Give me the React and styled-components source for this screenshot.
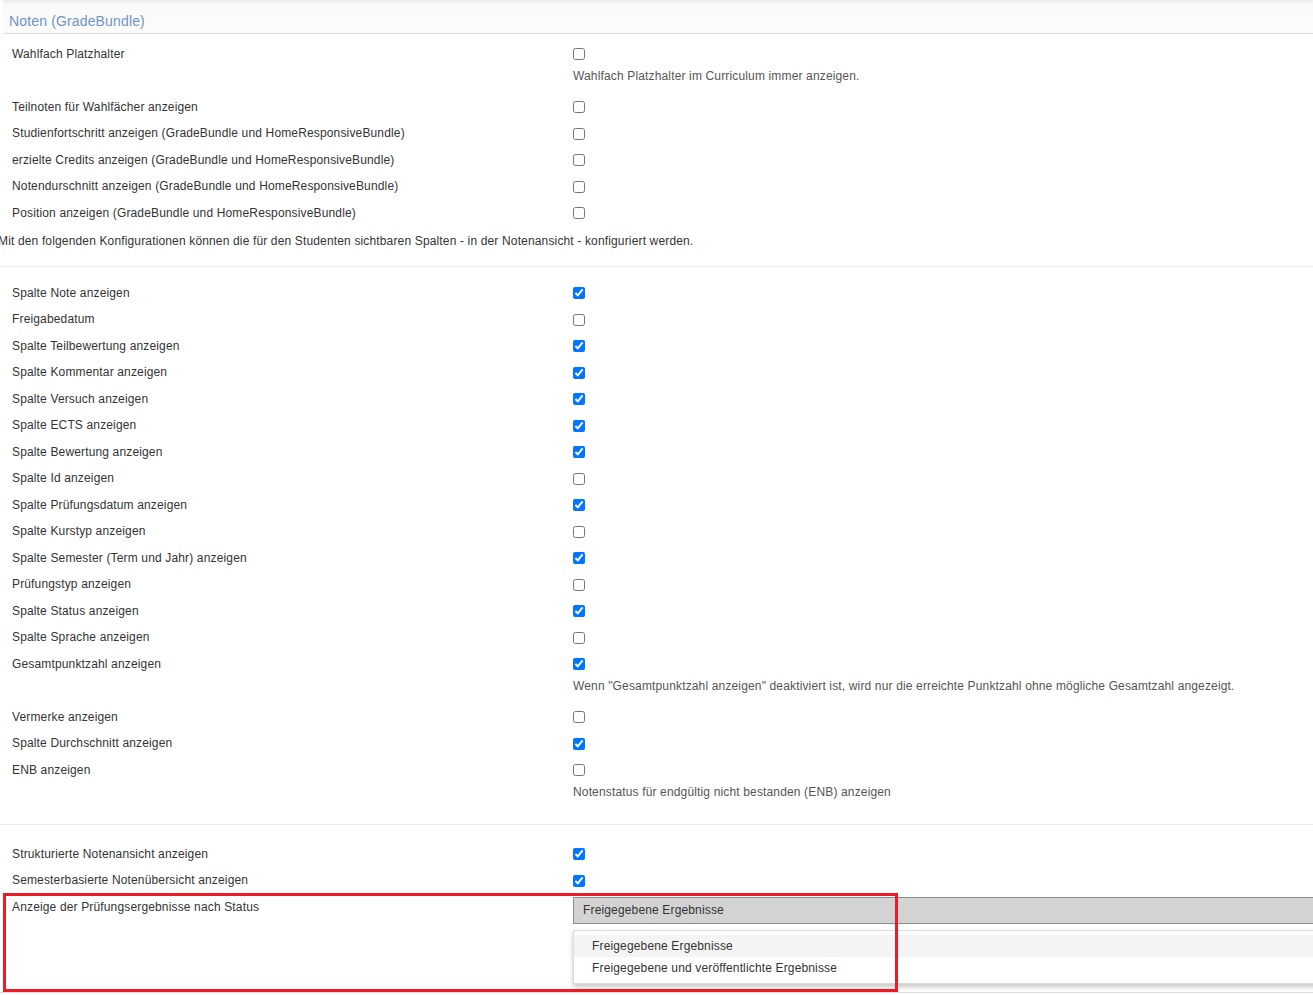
import React from "react";
import styled, { createGlobalStyle } from "styled-components";

const GlobalStyle = createGlobalStyle`
    html, body {
        margin: 0;
        padding: 0;
        background: #fff;
        overflow: hidden;
    }
    body {
        font-family: "Liberation Sans", Arial, sans-serif;
        font-size: 12px;
        letter-spacing: 0.15px;
        color: #333;
    }
`;

const general = [
    { label: "Wahlfach Platzhalter", checked: false, help: "Wahlfach Platzhalter im Curriculum immer anzeigen." },
    { label: "Teilnoten für Wahlfächer anzeigen", checked: false },
    { label: "Studienfortschritt anzeigen (GradeBundle und HomeResponsiveBundle)", checked: false },
    { label: "erzielte Credits anzeigen (GradeBundle und HomeResponsiveBundle)", checked: false },
    { label: "Notendurschnitt anzeigen (GradeBundle und HomeResponsiveBundle)", checked: false },
    { label: "Position anzeigen (GradeBundle und HomeResponsiveBundle)", checked: false }
];

const columns = [
    { label: "Spalte Note anzeigen", checked: true },
    { label: "Freigabedatum", checked: false },
    { label: "Spalte Teilbewertung anzeigen", checked: true },
    { label: "Spalte Kommentar anzeigen", checked: true },
    { label: "Spalte Versuch anzeigen", checked: true },
    { label: "Spalte ECTS anzeigen", checked: true },
    { label: "Spalte Bewertung anzeigen", checked: true },
    { label: "Spalte Id anzeigen", checked: false },
    { label: "Spalte Prüfungsdatum anzeigen", checked: true },
    { label: "Spalte Kurstyp anzeigen", checked: false },
    { label: "Spalte Semester (Term und Jahr) anzeigen", checked: true },
    { label: "Prüfungstyp anzeigen", checked: false },
    { label: "Spalte Status anzeigen", checked: true },
    { label: "Spalte Sprache anzeigen", checked: false },
    {
        label: "Gesamtpunktzahl anzeigen",
        checked: true,
        help: "Wenn \"Gesamtpunktzahl anzeigen\" deaktiviert ist, wird nur die erreichte Punktzahl ohne mögliche Gesamtzahl angezeigt."
    },
    { label: "Vermerke anzeigen", checked: false },
    { label: "Spalte Durchschnitt anzeigen", checked: true },
    { label: "ENB anzeigen", checked: false, help: "Notenstatus für endgültig nicht bestanden (ENB) anzeigen" }
];

const views = [
    { label: "Strukturierte Notenansicht anzeigen", checked: true },
    { label: "Semesterbasierte Notenübersicht anzeigen", checked: true }
];

const statusOptions = ["Freigegebene Ergebnisse", "Freigegebene und veröffentlichte Ergebnisse"];

const SettingRow = ({ label, checked, help }) => (
    <Row>
        <Label>{label}</Label>
        <Control>
            <CheckLine>
                <Checkbox type="checkbox" checked={checked} readOnly />
            </CheckLine>
            {help && <Help>{help}</Help>}
        </Control>
    </Row>
);

const App = () => {
    return (
        <>
            <GlobalStyle />
            <Page>
                <Header>
                    <Title>Noten (GradeBundle)</Title>
                </Header>
                <Section>
                    {general.map((s) => <SettingRow key={s.label} {...s} />)}
                </Section>
                <Intro>
                    Mit den folgenden Konfigurationen können die für den Studenten sichtbaren Spalten - in der Notenansicht - konfiguriert werden.
                </Intro>
                <Divider $top={16.75} $bottom={6} />
                <Section>
                    {columns.map((s) => <SettingRow key={s.label} {...s} />)}
                </Section>
                <Divider $top={14.25} $bottom={9} />
                <Section>
                    {views.map((s) => <SettingRow key={s.label} {...s} />)}
                    <Row>
                        <Label>Anzeige der Prüfungsergebnisse nach Status</Label>
                        <Control>
                            <SelectBox>{statusOptions[0]}</SelectBox>
                            <OptionList>
                                {statusOptions.map((o, i) => (
                                    <Option key={o} $active={i === 0}>{o}</Option>
                                ))}
                            </OptionList>
                        </Control>
                        <Highlight />
                    </Row>
                </Section>
                <BottomLine />
            </Page>
        </>
    );
};

const Page = styled.div`
    position: relative;
    width: 1313px;
    min-height: 995px;
    overflow: hidden;
`;

const Header = styled.div`
    height: 34px;
    margin-left: 3px;
    padding: 0 6px 4px;
    box-sizing: border-box;
    display: flex;
    align-items: flex-end;
    border-bottom: 1px solid #dcdcdc;
    background: linear-gradient(180deg, #ececec 0px, #f9f9f9 4px, #fcfcfc 100%);
`;

const Title = styled.h2`
    margin: 0;
    font-size: 14px;
    line-height: 16px;
    font-weight: normal;
    color: #6f93c7;
`;

const Section = styled.div`
    display: flex;
    flex-direction: column;
    padding-top: 6.75px;
`;

const Row = styled.div`
    position: relative;
    display: grid;
    grid-template-columns: 573px 1fr;
    padding: 5px 0;
    line-height: 16.5px;
`;

const Label = styled.div`
    padding-left: 12px;
    color: #333;
`;

const Control = styled.div`
    display: flex;
    flex-direction: column;
    min-width: 0;
`;

const CheckLine = styled.div`
    height: 16.5px;
    display: flex;
    align-items: center;
`;

const Checkbox = styled.input`
    width: 12px;
    height: 12px;
    margin: 0;
`;

const Help = styled.div`
    margin: 5.5px 0 4.5px;
    color: #555;
    white-space: nowrap;
`;

const Intro = styled.p`
    margin: 6.5px 0 0 -2px;
    line-height: 16.5px;
    color: #333;
    white-space: nowrap;
`;

const Divider = styled.hr`
    margin: ${(p) => p.$top}px 0 ${(p) => p.$bottom}px;
    border: 0;
    border-top: 1px solid #ececec;
`;

const SelectBox = styled.div`
    width: 900px;
    height: 27px;
    box-sizing: border-box;
    margin-top: -1.75px;
    padding: 0 9px;
    display: flex;
    align-items: center;
    background: #d3d3d3;
    border: 1px solid #8c8c8c;
    border-right: 0;
    color: #333;
`;

const OptionList = styled.div`
    width: 900px;
    margin-top: 6px;
    padding: 4px 0;
    box-sizing: border-box;
    background: #fff;
    border: 1px solid #dadada;
    border-right: 0;
    box-shadow: 0 3px 5px rgba(0, 0, 0, 0.22);
`;

const Option = styled.div`
    height: 22px;
    padding-left: 18px;
    display: flex;
    align-items: center;
    color: #333;
    background: ${(p) => (p.$active ? "#f4f4f4" : "#fff")};
`;

const Highlight = styled.div`
    position: absolute;
    top: -1px;
    left: 3px;
    width: 895px;
    height: 99px;
    box-sizing: border-box;
    border: 3px solid #ed1c24;
    pointer-events: none;
`;

const BottomLine = styled.div`
    margin-top: 3px;
    height: 1px;
    background: #dcdcdc;
`;

export default App;
